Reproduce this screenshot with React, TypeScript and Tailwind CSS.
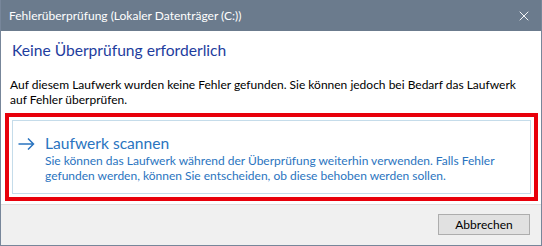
import { X } from 'lucide-react'

// Windows 10 style "Fehlerüberprüfung" dialog

const font = { fontFamily: 'Lato, "Noto Sans", Arial, sans-serif' }

export default function App() {
  return (
    <div className="w-[542px] h-[246px] flex flex-col bg-white border-x border-b border-[#77869a] overflow-hidden" style={font}>
      {/* Title bar */}
      <div className="h-[31px] shrink-0 bg-[#6b7b8d] flex items-center justify-between pl-[8px] pr-[9px] text-white">
        <span className="text-[12px] leading-none whitespace-nowrap">Fehlerüberprüfung (Lokaler Datenträger (C:))</span>
        <X className="w-[16px] h-[16px]" strokeWidth={1.4} />
      </div>

      {/* Content */}
      <div className="h-[173px] shrink-0 flex flex-col pt-[9px]">
        <h1 className="px-[11px] text-[15.6px] leading-[20px] text-[#1e3d9e] whitespace-nowrap">Keine Überprüfung erforderlich</h1>
        <p className="px-[9px] mt-[17px] text-[12px] leading-[15px] text-black whitespace-nowrap">
          Auf diesem Laufwerk wurden keine Fehler gefunden. Sie können jedoch bei Bedarf das Laufwerk
          <br />
          auf Fehler überprüfen.
        </p>

        {/* highlighted command link */}
        <div className="mt-[6px] ml-[4px] w-[533px] h-[88px] border-[4px] border-[#e8000b] p-[3px]">
          <div className="border border-[#c5dcea] h-full flex pl-[5px] pt-[12px]">
            <svg width="17" height="12" viewBox="0 0 17 12" className="mt-[5px] shrink-0 text-[#2a74c0]">
              <path d="M0.5 6 H15.5 M10 0.5 L15.5 6 L10 11.5" fill="none" stroke="currentColor" strokeWidth="1.5" />
            </svg>
            <div className="ml-[10px] text-[#2a74c0] whitespace-nowrap">
              <div className="text-[15.6px] leading-[20px]">Laufwerk scannen</div>
              <div className="text-[12px] leading-[15px]">
                Sie können das Laufwerk während der Überprüfung weiterhin verwenden. Falls Fehler
                <br />
                gefunden werden, können Sie entscheiden, ob diese behoben werden sollen.
              </div>
            </div>
          </div>
        </div>
      </div>

      {/* Footer */}
      <div className="h-[41px] shrink-0 bg-[#f0f0f0] border-t border-[#dfdfdf] flex items-start justify-end pr-[11px] pt-[9px]">
        <button className="w-[92px] h-[21px] bg-[#e1e1e1] border border-[#adadad] text-[12px] leading-none text-black">
          Abbrechen
        </button>
      </div>
    </div>
  )
}
